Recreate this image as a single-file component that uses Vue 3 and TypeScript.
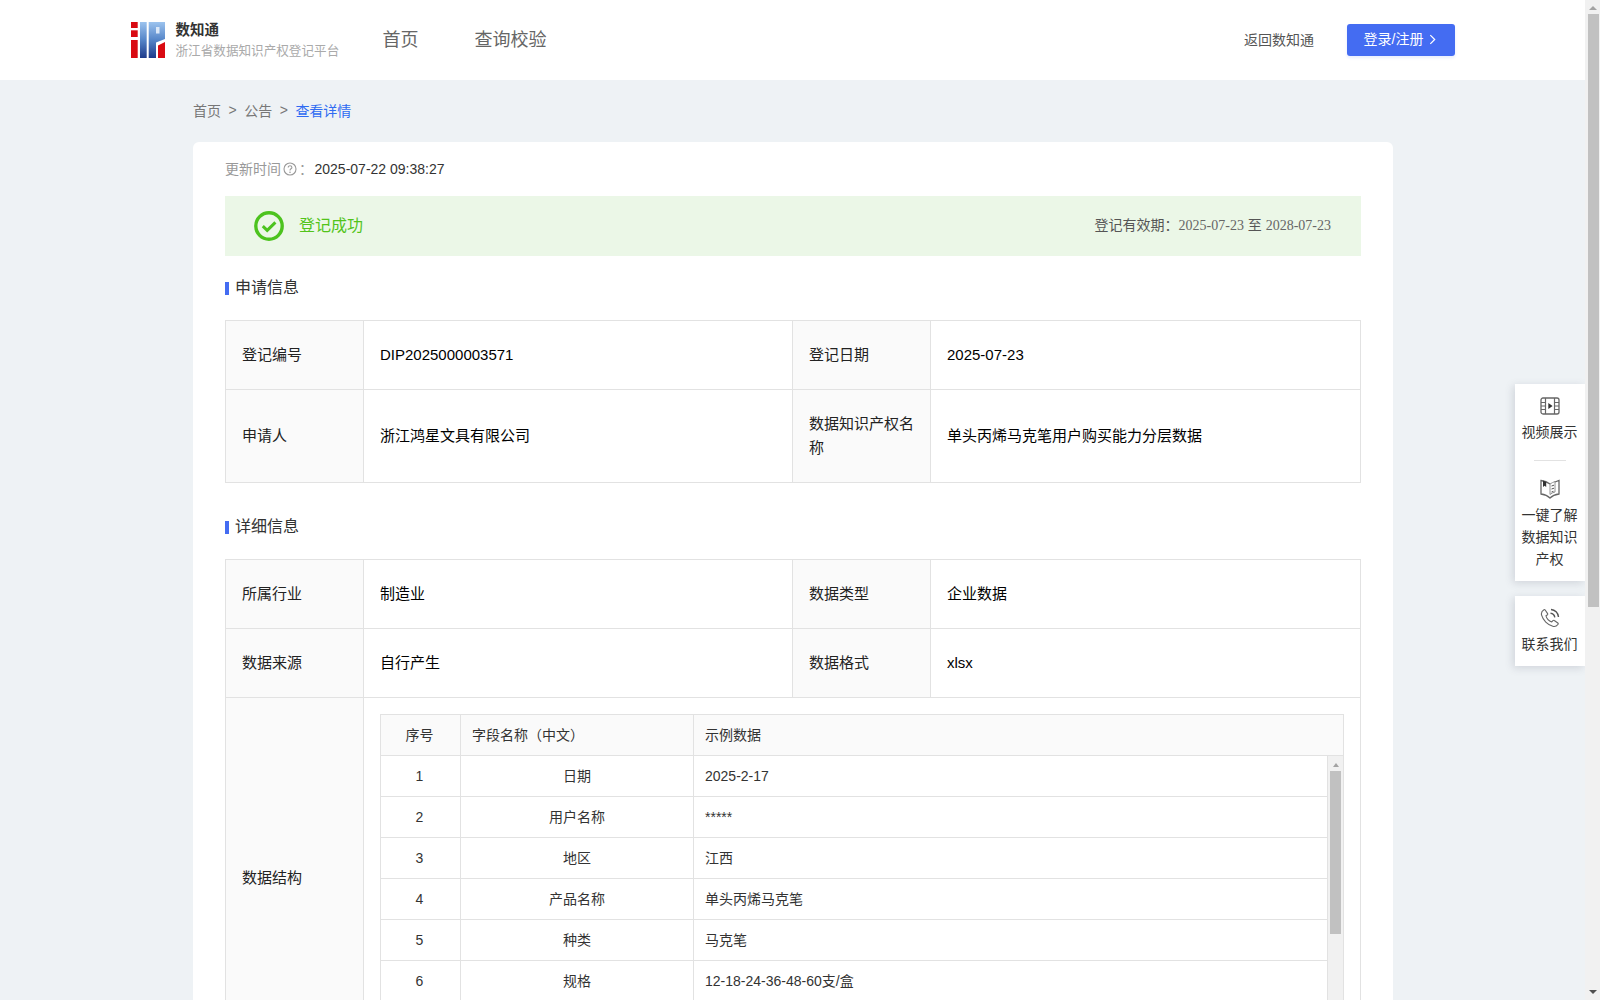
<script setup lang="ts">
interface FieldRow {
  no: number
  name: string
  sample: string
}

const fieldRows: FieldRow[] = [
  { no: 1, name: '日期', sample: '2025-2-17' },
  { no: 2, name: '用户名称', sample: '*****' },
  { no: 3, name: '地区', sample: '江西' },
  { no: 4, name: '产品名称', sample: '单头丙烯马克笔' },
  { no: 5, name: '种类', sample: '马克笔' },
  { no: 6, name: '规格', sample: '12-18-24-36-48-60支/盒' },
]
</script>

<template>
  <div class="window">
    <div class="page">
      <!-- Header -->
      <header class="header">
        <div class="brand">
          <svg class="logo" viewBox="0 0 34 36" width="34" height="36">
            <defs>
              <linearGradient id="bar" x1="0" y1="0" x2="0" y2="1">
                <stop offset="0" stop-color="#9cc3ee" />
                <stop offset="0.5" stop-color="#5585c8" />
                <stop offset="1" stop-color="#1d3a8a" />
              </linearGradient>
            </defs>
            <rect x="0" y="0" width="6.7" height="6" fill="#d90a12" />
            <rect x="0" y="8.3" width="6.7" height="6.7" fill="#d90a12" />
            <rect x="0" y="18" width="6.7" height="18" fill="#d90a12" />
            <rect x="9" y="0" width="6.7" height="36" fill="url(#bar)" />
            <path d="M17.7 0H34V17L25 20.5V36H17.7Z" fill="url(#bar)" />
            <rect x="25" y="5" width="3.5" height="6.5" fill="#dbe8f8" />
            <path d="M27 23.5L34 20V36H27Z" fill="#d90a12" />
          </svg>
          <div class="brand-text">
            <div class="brand-name">数知通</div>
            <div class="brand-sub">浙江省数据知识产权登记平台</div>
          </div>
        </div>
        <nav class="nav">
          <a>首页</a>
          <a>查询校验</a>
        </nav>
        <div class="header-right">
          <a class="back">返回数知通</a>
          <button class="login">
            <span>登录/注册</span>
            <svg viewBox="0 0 8 12" width="7" height="11">
              <path d="M1.5 1L6.5 6L1.5 11" fill="none" stroke="#fff" stroke-width="1.4" />
            </svg>
          </button>
        </div>
      </header>

      <main class="main">
        <!-- Breadcrumb -->
        <div class="crumbs">
          <span>首页</span><i>&gt;</i><span>公告</span><i>&gt;</i><span class="current">查看详情</span>
        </div>

        <section class="card">
          <div class="updated">
            <span class="updated-label">更新时间</span>
            <svg class="help" viewBox="0 0 14 14" width="14" height="14">
              <circle cx="7" cy="7" r="6" fill="none" stroke="#999" stroke-width="1.1" />
              <path d="M5.2 5.5C5.2 3.2 8.9 3.3 8.9 5.4C8.9 6.8 7 6.8 7 8.4" fill="none" stroke="#999" stroke-width="1.1" />
              <circle cx="7" cy="10.2" r="0.8" fill="#999" />
            </svg>
            <span class="updated-label colon">：</span>
            <span>2025-07-22 09:38:27</span>
          </div>

          <div class="banner">
            <svg viewBox="0 0 30 30" width="30" height="30">
              <circle cx="15" cy="15" r="13.2" fill="none" stroke="#4cc31e" stroke-width="3.4" />
              <path d="M8.8 15.2L13.2 19.4L21.4 11.4" fill="none" stroke="#4cc31e" stroke-width="3" />
            </svg>
            <span class="banner-title">登记成功</span>
            <span class="banner-range">登记有效期：<em>2025-07-23</em> 至 <em>2028-07-23</em></span>
          </div>

          <h3 class="section-title">申请信息</h3>
          <table class="info">
            <colgroup>
              <col class="c-label" /><col class="c-value" /><col class="c-label" /><col />
            </colgroup>
            <tbody>
              <tr class="row-std">
                <th>登记编号</th>
                <td>DIP2025000003571</td>
                <th>登记日期</th>
                <td>2025-07-23</td>
              </tr>
              <tr class="row-tall">
                <th>申请人</th>
                <td>浙江鸿星文具有限公司</td>
                <th>数据知识产权名称</th>
                <td>单头丙烯马克笔用户购买能力分层数据</td>
              </tr>
            </tbody>
          </table>

          <h3 class="section-title second">详细信息</h3>
          <table class="info">
            <colgroup>
              <col class="c-label" /><col class="c-value" /><col class="c-label" /><col />
            </colgroup>
            <tbody>
              <tr class="row-std">
                <th>所属行业</th>
                <td>制造业</td>
                <th>数据类型</th>
                <td>企业数据</td>
              </tr>
              <tr class="row-std">
                <th>数据来源</th>
                <td>自行产生</td>
                <th>数据格式</th>
                <td>xlsx</td>
              </tr>
              <tr>
                <th class="structure-label">数据结构</th>
                <td colspan="3" class="structure">
                  <div class="fields">
                    <div class="fields-head">
                      <span class="f-no">序号</span>
                      <span class="f-name">字段名称（中文）</span>
                      <span class="f-sample">示例数据</span>
                    </div>
                    <div class="fields-body">
                      <div class="fields-rows">
                        <div v-for="row in fieldRows" :key="row.no" class="fields-row">
                          <span class="f-no">{{ row.no }}</span>
                          <span class="f-name center">{{ row.name }}</span>
                          <span class="f-sample">{{ row.sample }}</span>
                        </div>
                      </div>
                      <div class="inner-bar">
                        <span class="arrow-up small"></span>
                        <span class="inner-thumb"></span>
                      </div>
                    </div>
                  </div>
                </td>
              </tr>
            </tbody>
          </table>
        </section>
      </main>

      <!-- Floating tools -->
      <aside class="tools">
        <div class="tool-box first">
          <div class="tool">
            <svg viewBox="0 0 20 20" width="20" height="20">
              <rect x="1" y="2" width="18" height="16" rx="2" fill="none" stroke="#666" stroke-width="1.3" />
              <path d="M5.5 2V18M14.5 2V18M1 6.5H5.5M1 10H5.5M1 13.5H5.5M14.5 6.5H19M14.5 10H19M14.5 13.5H19" fill="none" stroke="#666" stroke-width="1.2" />
              <path d="M8.3 7L12.6 10L8.3 13Z" fill="#333" />
            </svg>
            <span>视频展示</span>
          </div>
          <div class="tool-line"></div>
          <div class="tool">
            <svg viewBox="0 0 20 20" width="20" height="20">
              <path d="M10 5C8 3.5 4.5 2 1 1.5V15C4.5 15.5 8 17 10 19C12 17 15.5 15.5 19 15V1.5L15 3" fill="none" stroke="#666" stroke-width="1.3" />
              <path d="M10 5C11.5 4 13.5 3 15 2.5V13C13 13.5 11.5 14.2 10 15.5Z" fill="none" stroke="#888" stroke-width="0.9" />
              <path d="M3 1.5V8L4.6 6.8L6.2 8V3Z" fill="#333" />
              <path d="M11.5 7L14 6.2M11.5 10L14 9.2M11.5 13L13.5 12.3" fill="none" stroke="#555" stroke-width="1" />
            </svg>
            <span>一键了解</span>
            <span>数据知识</span>
            <span>产权</span>
          </div>
        </div>
        <div class="tool-box last">
          <div class="tool">
            <svg viewBox="0 0 20 20" width="20" height="20">
              <path d="M5 1.8L7.6 5.6C7.9 6.1 7.7 6.7 7.2 7L6 7.8C6.7 10.5 9 12.9 11.8 13.9L12.9 12.7C13.3 12.3 13.9 12.2 14.3 12.5L17.8 15C18.3 15.4 18.3 16 17.9 16.5C16.6 18.2 14.8 18.9 12.8 18.3C7.6 16.8 3 12.2 1.6 7.2C1 5.1 2 3 4 1.8C4.4 1.6 4.8 1.6 5 1.8Z" fill="none" stroke="#666" stroke-width="1.1" />
              <path d="M10.5 5.2C12.8 5.4 14.5 7.2 14.8 9.4M11 1.5C15 1.8 18.2 5 18.5 9" fill="none" stroke="#555" stroke-width="1.4" />
            </svg>
            <span>联系我们</span>
          </div>
        </div>
      </aside>
    </div>

    <!-- Page scrollbar -->
    <div class="page-bar">
      <span class="arrow-up"></span>
      <span class="page-thumb"></span>
      <span class="page-rest"></span>
      <span class="arrow-down"></span>
    </div>
  </div>
</template>

<style scoped>
.window {
  display: flex;
  height: 1000px;
  overflow: hidden;
  font-family: "Liberation Sans", "Noto Sans CJK SC", sans-serif;
  font-size: 14px;
  color: #333;
}

.page {
  flex: 1;
  min-width: 0;
  position: relative;
  overflow: hidden;
  background: #eef2f5;
}

/* Header */
.header {
  display: flex;
  align-items: center;
  height: 80px;
  padding: 0 130px 0 131px;
  background: #fff;
}

.brand {
  display: flex;
  align-items: center;
  gap: 10.5px;
  width: 251.5px;
}

.logo {
  flex: none;
}

.brand-text {
  padding-top: 1px;
}

.brand-name {
  font-size: 14.5px;
  font-weight: 700;
  line-height: 19px;
  color: #333;
}

.brand-sub {
  margin-top: 2px;
  font-size: 12.6px;
  line-height: 19px;
  color: #aaa;
  white-space: nowrap;
}

.nav {
  display: flex;
  gap: 56px;
  padding-bottom: 4px;
  font-size: 18px;
  color: #666;
}

.header-right {
  display: flex;
  align-items: center;
  gap: 33px;
  margin-left: auto;
}

.back {
  padding-bottom: 2px;
  color: #555;
}

.login {
  display: flex;
  align-items: center;
  justify-content: center;
  gap: 6px;
  width: 108px;
  height: 32px;
  padding: 0 2px 0 0;
  border: 0;
  border-radius: 3px;
  background: #446cf2;
  box-shadow: 0 2px 3px rgba(68, 108, 242, 0.12);
  color: #fff;
  font: inherit;
}

.login span {
  padding-bottom: 4px;
}

.login svg {
  margin-bottom: 1px;
}

/* Breadcrumb */
.main {
  width: 1200px;
  margin-left: 193px;
}

.crumbs {
  display: flex;
  align-items: center;
  height: 62px;
  padding-bottom: 3px;
  box-sizing: border-box;
  color: #777;
}

.crumbs i {
  margin: 0 7.5px;
  font-style: normal;
}

.crumbs .current {
  color: #2f6bf2;
}

/* Card */
.card {
  padding: 16px 32px 0;
  border-radius: 6px;
  background: #fff;
}

.updated {
  display: flex;
  align-items: center;
  height: 22px;
  color: #333;
}

.updated-label {
  padding-bottom: 2px;
  color: #999;
}

.help {
  margin: 0 2px;
}

.colon {
  width: 15.5px;
}

.banner {
  display: flex;
  align-items: center;
  height: 60px;
  margin-top: 16px;
  padding: 0 30px 0 29px;
  background: #ebf7e7;
}

.banner-title {
  margin-left: 15px;
  padding-bottom: 4px;
  font-size: 16px;
  color: #52c41a;
}

.banner-range {
  margin-left: auto;
  padding-bottom: 5px;
  color: #555;
}

.banner-range em {
  font-family: "Liberation Serif", serif;
  font-style: normal;
  color: #666;
}

.section-title {
  position: relative;
  margin: 22px 0 22px;
  padding-left: 10px;
  font-size: 16px;
  font-weight: 400;
  line-height: 20px;
  color: #333;
}

.section-title::before {
  content: "";
  position: absolute;
  left: 0;
  top: 4px;
  width: 4px;
  height: 13px;
  background: #446cf2;
}

.section-title.second {
  margin-top: 34px;
}

/* Tables */
.info {
  width: 100%;
  table-layout: fixed;
  border-collapse: collapse;
  font-size: 15px;
  color: #000;
}

.c-label {
  width: 138px;
}

.c-value {
  width: 429px;
}

.info th,
.info td {
  padding: 0 16px;
  border: 1px solid #e2e2e2;
  font-weight: 400;
  line-height: 24px;
  text-align: left;
}

.info th {
  background: #fafafa;
  color: #222;
}

.info th.structure-label {
  padding-bottom: 4px;
}

.row-std {
  height: 69px;
}

.row-tall {
  height: 93px;
}

.info td.structure {
  padding: 16px;
}

.fields {
  display: flex;
  flex-direction: column;
  height: 330px;
  border: 1px solid #e2e2e2;
  border-bottom: 0;
  font-size: 14px;
  color: #333;
}

.fields-head,
.fields-row {
  display: flex;
  box-sizing: border-box;
  height: 41px;
  line-height: 40px;
  border-bottom: 1px solid #e2e2e2;
}

.fields-head {
  background: #fafafa;
}

.f-no {
  flex: none;
  box-sizing: border-box;
  width: 80px;
  padding-right: 2px;
  text-align: center;
  border-right: 1px solid #e2e2e2;
}

.f-name {
  flex: none;
  width: 233px;
  padding: 0 11px;
  box-sizing: border-box;
  border-right: 1px solid #e2e2e2;
}

.f-name.center {
  text-align: center;
}

.f-sample {
  flex: 1;
  padding: 0 11px;
}

.fields-body {
  display: flex;
  flex: 1;
  min-height: 0;
  overflow: hidden;
}

.fields-rows {
  flex: 1;
  min-width: 0;
}

.inner-bar {
  flex: none;
  display: flex;
  flex-direction: column;
  align-items: center;
  width: 15px;
  border-left: 1px solid #e2e2e2;
  background: #f1f1f1;
}

.inner-thumb {
  width: 11px;
  height: 163px;
  margin-top: 4px;
  background: #c1c1c1;
}

/* Floating tools */
.tools {
  position: absolute;
  top: 384px;
  right: 0;
  display: flex;
  flex-direction: column;
  gap: 15px;
  width: 70px;
}

.tool-box {
  padding: 12px 0 11px;
  background: #fff;
  box-shadow: -2px 2px 8px rgba(70, 80, 100, 0.18);
}

.tool {
  display: flex;
  flex-direction: column;
  align-items: center;
  padding-right: 1px;
  line-height: 22px;
  color: #333;
}

.tool svg {
  margin-bottom: 5px;
}

.tool-line {
  width: 32px;
  height: 1px;
  margin: 17px auto 18px;
  background: #e2e2e2;
}

/* Page scrollbar */
.page-bar {
  flex: none;
  display: flex;
  flex-direction: column;
  align-items: center;
  width: 15px;
  background: #f1f1f1;
}

.page-thumb {
  width: 11px;
  height: 593px;
  margin-top: 4px;
  margin-left: 1px;
  background: #c1c1c1;
}

.page-rest {
  flex: 1;
}

.arrow-up,
.arrow-down {
  width: 0;
  height: 0;
  border-left: 4px solid transparent;
  border-right: 4px solid transparent;
}

.arrow-up {
  margin-top: 6px;
  border-bottom: 4px solid #a3a3a3;
}

.arrow-up.small {
  margin-top: 7px;
  border-left-width: 3.5px;
  border-right-width: 3.5px;
}

.arrow-down {
  margin-bottom: 6px;
  border-top: 4px solid #505050;
}
</style>
